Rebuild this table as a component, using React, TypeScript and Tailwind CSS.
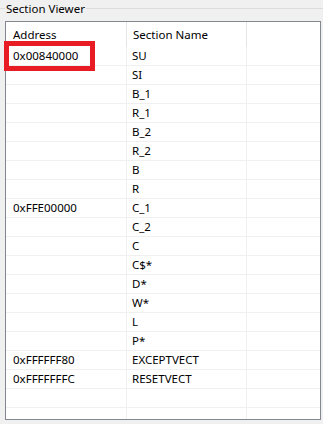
const rows: [string, string][] = [
  ['0x00840000', 'SU'],
  ['', 'SI'],
  ['', 'B_1'],
  ['', 'R_1'],
  ['', 'B_2'],
  ['', 'R_2'],
  ['', 'B'],
  ['', 'R'],
  ['0xFFE00000', 'C_1'],
  ['', 'C_2'],
  ['', 'C'],
  ['', 'C$*'],
  ['', 'D*'],
  ['', 'W*'],
  ['', 'L'],
  ['', 'P*'],
  ['0xFFFFFF80', 'EXCEPTVECT'],
  ['0xFFFFFFFC', 'RESETVECT'],
  ['', ''],
  ['', ''],
]

export default function App() {
  return (
    <div className="relative w-[323px] h-[424px] bg-[#f0f0f0] overflow-hidden font-['Segoe_UI','Noto_Sans',sans-serif] text-[11.5px] text-black">
      {/* group box caption */}
      <div className="flex items-center h-[17px]">
        <div className="w-[5px] h-px bg-[#dcdcdc]" />
        <span className="px-[1px] leading-[17px]">Section Viewer</span>
        <div className="flex-1 h-px bg-[#dcdcdc]" />
      </div>

      {/* list view */}
      <div className="ml-[5px] mt-[4px] w-[316px] h-[399px] border border-[#828790] bg-white overflow-hidden">
        <div className="flex h-[25px] items-center">
          <div className="w-[121px] h-full flex items-center pl-[7px] border-r border-[#e5e5e5]">Address</div>
          <div className="w-[120px] h-full flex items-center pl-[6px] border-r border-[#e5e5e5]">Section Name</div>
          <div className="flex-1" />
        </div>
        {rows.map(([addr, name], i) => (
          <div key={i} className="flex h-[19px] border-b border-[#f0f0f0]">
            <div className="w-[121px] flex items-center pl-[7px] border-r border-[#f0f0f0]">{addr}</div>
            <div className="w-[120px] flex items-center pl-[5px] border-r border-[#f0f0f0]">{name}</div>
            <div className="flex-1" />
          </div>
        ))}
      </div>

      {/* highlight around the first address */}
      <div className="absolute left-[4px] top-[41px] w-[91px] h-[30px] border-[5px] border-[#e81c24]" />
    </div>
  )
}
